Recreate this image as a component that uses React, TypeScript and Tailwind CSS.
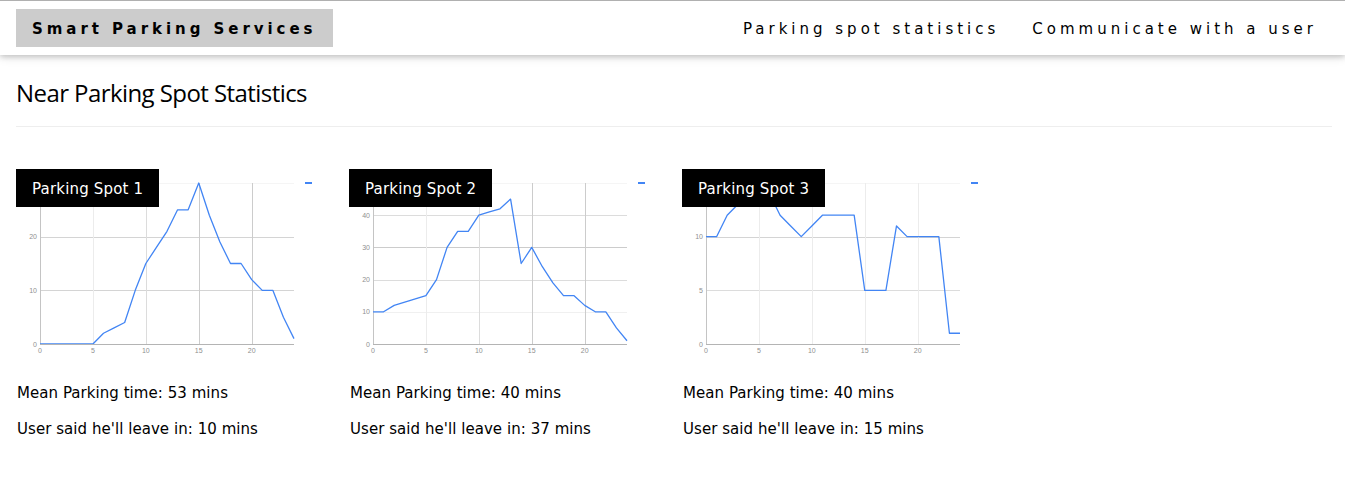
import React from 'react';

type GridLine = { at: number; color: string };

type Spot = {
    id: number;
    max: number;
    data: number[];
    hGrid: GridLine[];
    vGrid: GridLine[];
    mean: number;
    leave: number;
};

const V_GRID_HOURS = [5, 10, 15, 20];

const SPOTS: Spot[] = [
    {
        id: 1,
        max: 30,
        data: [0, 0, 0, 0, 0, 0, 2, 3, 4, 10, 15, 18, 21, 25, 25, 30, 24, 19, 15, 15, 12, 10, 10, 5, 1],
        hGrid: [
            { at: 30, color: '#f5f5f5' },
            { at: 20, color: '#d4d4d4' },
            { at: 10, color: '#d4d4d4' },
        ],
        vGrid: [
            { at: 5, color: '#ececec' },
            { at: 10, color: '#dcdcdc' },
            { at: 15, color: '#cccccc' },
            { at: 20, color: '#cccccc' },
        ],
        mean: 53,
        leave: 10,
    },
    {
        id: 2,
        max: 50,
        data: [10, 10, 12, 13, 14, 15, 20, 30, 35, 35, 40, 41, 42, 45, 25, 30, 24, 19, 15, 15, 12, 10, 10, 5, 1],
        hGrid: [
            { at: 50, color: '#f5f5f5' },
            { at: 40, color: '#dcdcdc' },
            { at: 30, color: '#cccccc' },
            { at: 20, color: '#dcdcdc' },
            { at: 10, color: '#f0f0f0' },
        ],
        vGrid: [
            { at: 5, color: '#ececec' },
            { at: 10, color: '#dcdcdc' },
            { at: 15, color: '#cccccc' },
            { at: 20, color: '#cccccc' },
        ],
        mean: 40,
        leave: 37,
    },
    {
        id: 3,
        max: 15,
        data: [10, 10, 12, 13, 14, 14, 14, 12, 11, 10, 11, 12, 12, 12, 12, 5, 5, 5, 11, 10, 10, 10, 10, 1, 1],
        hGrid: [
            { at: 15, color: '#f5f5f5' },
            { at: 10, color: '#d4d4d4' },
            { at: 5, color: '#dcdcdc' },
        ],
        vGrid: [
            { at: 5, color: '#ececec' },
            { at: 10, color: '#ececec' },
            { at: 15, color: '#ececec' },
            { at: 20, color: '#ececec' },
        ],
        mean: 40,
        leave: 15,
    },
];

const LEFT = 24;
const RIGHT = 278;
const TOP = 14;
const BOTTOM = 175;

const xAt = (hour: number) => LEFT + (hour / 24) * (RIGHT - LEFT);
const yAt = (value: number, max: number) => BOTTOM - (value / max) * (BOTTOM - TOP);
const crisp = (n: number) => Math.round(n) + 0.5;

const SpotChart: React.FC<{ spot: Spot }> = ({ spot }) => {
    const points = spot.data.map((v, i) => `${xAt(i)},${yAt(v, spot.max)}`).join(' ');

    return (
        <svg width={317} height={191} viewBox="0 0 317 191" className="block font-['Liberation_Sans',sans-serif]">
            {spot.hGrid.map((g) => (
                <line key={g.at} x1={LEFT} x2={RIGHT} y1={crisp(yAt(g.at, spot.max))} y2={crisp(yAt(g.at, spot.max))} stroke={g.color} shapeRendering="crispEdges" />
            ))}
            {spot.vGrid.map((g) => (
                <line key={g.at} x1={crisp(xAt(g.at))} x2={crisp(xAt(g.at))} y1={TOP} y2={BOTTOM} stroke={g.color} shapeRendering="crispEdges" />
            ))}
            <line x1={LEFT + 0.5} x2={LEFT + 0.5} y1={TOP} y2={BOTTOM} stroke="#c4c4c4" shapeRendering="crispEdges" />

            {spot.hGrid.slice(1).map((g) => (
                <text key={g.at} x={LEFT - 3} y={yAt(g.at, spot.max) + 2.5} textAnchor="end" fontSize={7} fill="#8f8f8f">
                    {g.at}
                </text>
            ))}
            <text x={LEFT - 3} y={BOTTOM + 2.5} textAnchor="end" fontSize={7} fill="#8f8f8f">
                0
            </text>
            {[0, ...V_GRID_HOURS].map((h) => (
                <text key={h} x={xAt(h)} y={BOTTOM + 9} textAnchor="middle" fontSize={7} fill="#8f8f8f">
                    {h}
                </text>
            ))}

            <polyline points={points} fill="none" stroke="#4285f4" strokeWidth={1.3} strokeLinejoin="round" />
            {/* Axis goes over the line, flat zero values show as a pale tint */}
            <line x1={LEFT} x2={RIGHT} y1={BOTTOM + 0.5} y2={BOTTOM + 0.5} stroke="#b4b4b4" shapeRendering="crispEdges" />
            {/* Legend marker */}
            <rect x={289} y={13} width={7} height={2} fill="#4285f4" />
        </svg>
    );
};

const App: React.FC = () => {
    return (
        <div className="min-h-[503px] bg-white text-black font-['DejaVu_Sans',Verdana,sans-serif] text-[15px]">
            {/* Top bar */}
            <header className="relative z-10 h-[55px] border-t border-[#b0b0b0] bg-white shadow-[0_2px_5px_0_rgba(0,0,0,0.16),0_2px_10px_0_rgba(0,0,0,0.12)] flex items-start justify-between pl-4 pr-[12px] pt-2">
                <div className="h-[38px] w-[317px] bg-[#cccccc] px-4 pt-[2px] flex items-center font-bold tracking-[3.95px] whitespace-nowrap">
                    Smart Parking Services
                </div>
                <nav className="flex gap-px tracking-[4px]">
                    <a className="h-[38px] px-4 pt-[2px] flex items-center whitespace-nowrap">Parking spot statistics</a>
                    <a className="h-[38px] px-4 pt-[2px] flex items-center whitespace-nowrap">Communicate with a user</a>
                </nav>
            </header>

            <main className="px-4">
                <h1 className="pt-[22px] text-[24px] leading-[32px] tracking-[-0.57px] font-['Open_Sans',sans-serif] font-normal">
                    Near Parking Spot Statistics
                </h1>
                <hr className="mt-[17px] -mr-[3px] border-[#eeeeee]" />

                {/* Spot cards */}
                <div className="mt-[42px] grid grid-cols-[repeat(3,333px)]">
                    {SPOTS.map((spot) => (
                        <div key={spot.id} className="relative">
                            <div className="absolute top-0 left-0 h-[38px] w-[143px] px-4 pt-[2px] flex items-center bg-black text-white tracking-[0.18px] whitespace-nowrap">
                                Parking Spot {spot.id}
                            </div>
                            <SpotChart spot={spot} />
                            <p className="mt-[22px] ml-px leading-[22px] tracking-[0.05px]">Mean Parking time: {spot.mean} mins</p>
                            <p className="mt-[14px] ml-px leading-[22px] tracking-[0.05px]">User said he'll leave in: {spot.leave} mins</p>
                        </div>
                    ))}
                </div>
            </main>
        </div>
    );
};

export default App;
